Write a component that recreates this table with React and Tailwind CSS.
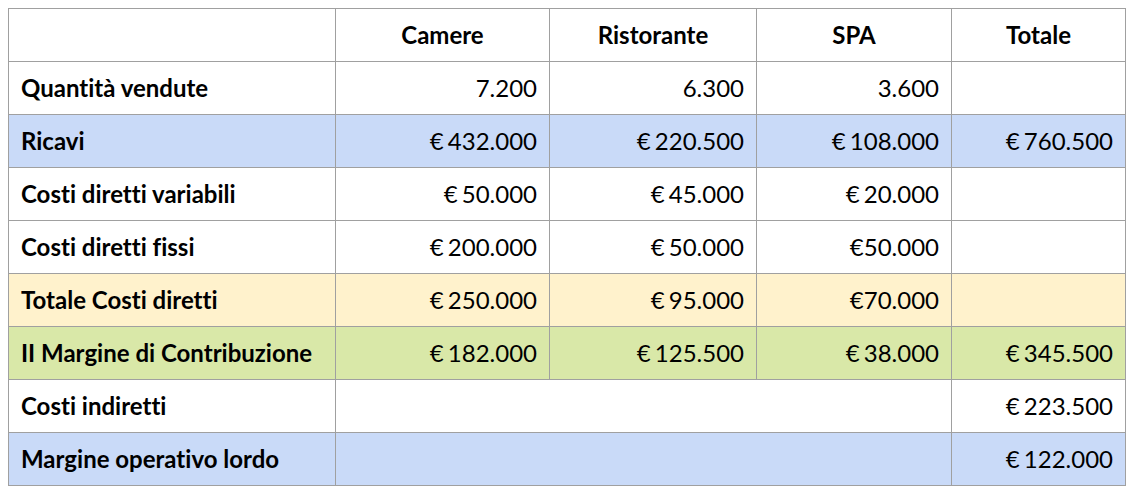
const rows = [
  { label: 'Quantità vendute', bg: '', cells: ['7.200', '6.300', '3.600', ''] },
  { label: 'Ricavi', bg: 'bg-[#c9daf8]', cells: ['€ 432.000', '€ 220.500', '€ 108.000', '€ 760.500'] },
  { label: 'Costi diretti variabili', bg: '', cells: ['€ 50.000', '€ 45.000', '€ 20.000', ''] },
  { label: 'Costi diretti fissi', bg: '', cells: ['€ 200.000', '€ 50.000', '€50.000', ''] },
  { label: 'Totale Costi diretti', bg: 'bg-[#fff2cc]', cells: ['€ 250.000', '€ 95.000', '€70.000', ''] },
  { label: 'II Margine di Contribuzione', bg: 'bg-[#d9e8a8]', cells: ['€ 182.000', '€ 125.500', '€ 38.000', '€ 345.500'] },
]

const merged = [
  { label: 'Costi indiretti', bg: '', total: '€ 223.500' },
  { label: 'Margine operativo lordo', bg: 'bg-[#c9daf8]', total: '€ 122.000' },
]

export default function App() {
  return (
    <div className="p-2 bg-white min-h-[493px] font-['Lato',sans-serif] text-[24px] leading-none text-black [font-variant-ligatures:none]">
      <table className="border-collapse table-fixed w-[1117px]">
        <colgroup>
          <col className="w-[327px]" />
          <col className="w-[214px]" />
          <col className="w-[207px]" />
          <col className="w-[195px]" />
          <col className="w-[174px]" />
        </colgroup>
        <thead>
          <tr className="h-[53px]">
            <th className="border border-[#a0a0a0]"></th>
            {['Camere', 'Ristorante', 'SPA', 'Totale'].map(h => (
              <th key={h} className="border border-[#a0a0a0] font-bold text-center">{h}</th>
            ))}
          </tr>
        </thead>
        <tbody>
          {rows.map(r => (
            <tr key={r.label} className={`h-[53px] ${r.bg}`}>
              <td className="border border-[#a0a0a0] font-bold pl-3 whitespace-nowrap">{r.label}</td>
              {r.cells.map((c, i) => (
                <td key={i} className="border border-[#a0a0a0] text-right pr-3 [word-spacing:-2px]">{c}</td>
              ))}
            </tr>
          ))}
          {merged.map(r => (
            <tr key={r.label} className={`h-[53px] ${r.bg}`}>
              <td className="border border-[#a0a0a0] font-bold pl-3">{r.label}</td>
              <td colSpan={3} className="border border-[#a0a0a0]"></td>
              <td className="border border-[#a0a0a0] text-right pr-3 [word-spacing:-2px]">{r.total}</td>
            </tr>
          ))}
        </tbody>
      </table>
    </div>
  )
}
